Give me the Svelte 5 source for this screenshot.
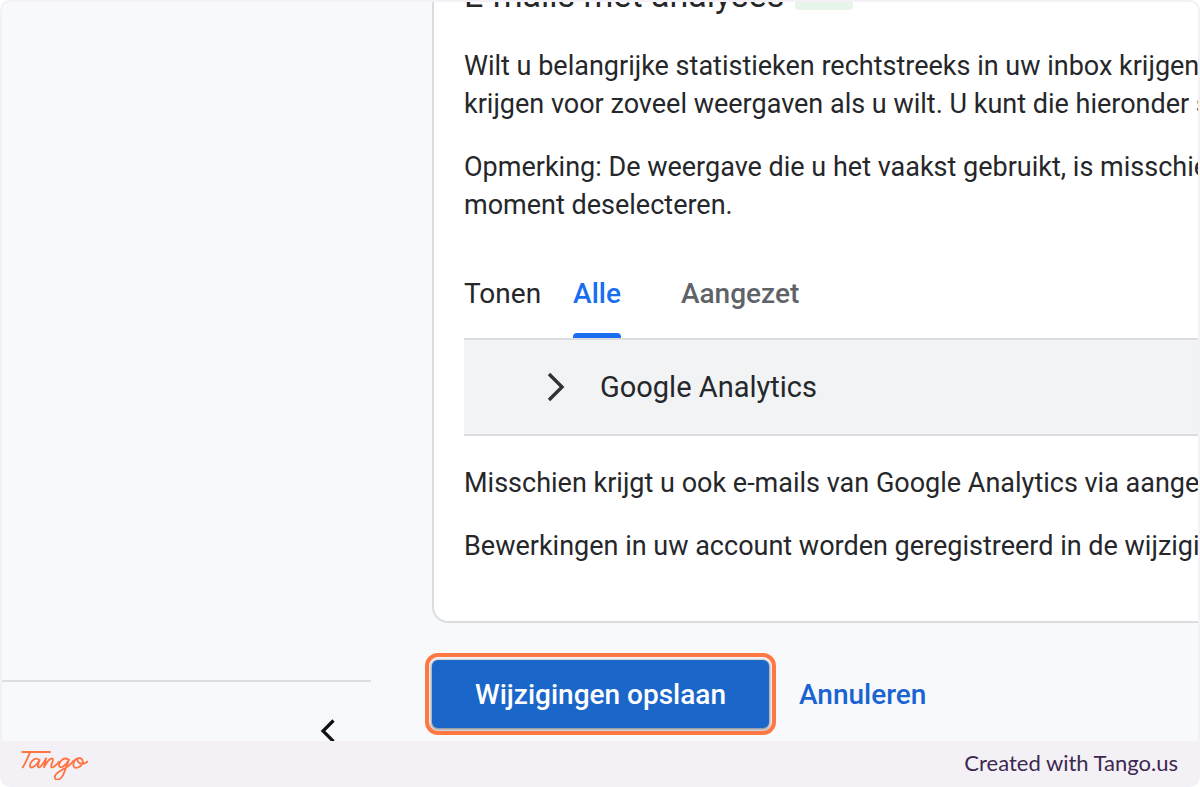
<script>
  let view = $state('Alle');
  const views = ['Alle', 'Aangezet'];
</script>

<div class="frame">
  <div class="shot">
    <aside>
      <div class="collapse">
        <button class="back" aria-label="Menu inklappen">
          <svg width="16" height="26" viewBox="0 0 16 26" aria-hidden="true">
            <path d="M13.5 2.5 3 13l10.500 10.500" fill="none" stroke="#111" stroke-width="3.200" />
          </svg>
        </button>
      </div>
    </aside>

    <main>
      <section class="card">
        <header>
          <h1>E-mails met analyses</h1>
          <span class="badge"></span>
        </header>
        <div class="copy">
          <p>Wilt u belangrijke statistieken rechtstreeks in uw inbox krijgen<br />krijgen voor zoveel weergaven als u wilt. U kunt die hieronder s</p>
          <p>Opmerking: De weergave die u het vaakst gebruikt, is misschien<br />moment deselecteren.</p>
        </div>
        <div class="tabs">
          <span class="label">Tonen</span>
          {#each views as name}
            <button class="tab" class:active={view === name} onclick={() => (view = name)}>{name}</button>
          {/each}
        </div>
        <button class="account">
          <svg width="20" height="32" viewBox="0 0 20 32" aria-hidden="true">
            <path d="M3 3 16 16 3 29" fill="none" stroke="#303236" stroke-width="3.400" />
          </svg>
          <span>Google Analytics</span>
        </button>
        <div class="copy">
          <p>Misschien krijgt u ook e-mails van Google Analytics via aangeb</p>
          <p>Bewerkingen in uw account worden geregistreerd in de wijzigin</p>
        </div>
      </section>
      <div class="actions">
        <button class="save">Wijzigingen opslaan</button>
        <button class="cancel">Annuleren</button>
      </div>
    </main>
  </div>

  <footer>
    <svg class="logo" width="70" height="32" viewBox="60 40 210 96" role="img" aria-label="Tango">
      <g fill="none" stroke="#ff7442" stroke-width="5.500" stroke-linecap="round" stroke-linejoin="round">
        <path d="M67 52H150" />
        <path d="M90 53C83 69 77 86 68 98" />
        <path d="M117 76C108 65 91 79 90 92C89 104 105 100 119 76C114 89 111 99 117 98C125 97 132 82 138 71L132 98C140 83 151 69 158 72C163 75 151 91 154 97C159 102 171 88 177 82" />
        <path d="M205 75C194 65 178 79 177 91C177 103 194 99 207 75L193 112C184 138 169 139 165 130C161 116 185 107 198 99C208 93 215 86 221 78" />
        <path d="M234 71C223 72 218 86 221 95C226 104 242 98 247 87C251 76 243 67 235 71C228 76 235 86 245 88C253 88 259 84 262 81" />
      </g>
    </svg>
    <span>Created with Tango.us</span>
  </footer>
</div>

<style>
  :global(body) {
    margin: 0;
    background: #fff;
  }

  .frame {
    display: flex;
    flex-direction: column;
    min-height: 100vh;
    box-sizing: border-box;
    padding: 2px 2px 0;
    overflow: hidden;
    border-radius: 10px;
    background: #f3f1f6;
    color: #25272a;
    font-family: Roboto, sans-serif;
    font-size: 27px;
  }

  .shot {
    flex: 1;
    display: flex;
    overflow: hidden;
    border-radius: 8px 8px 0 0;
    background: #f8f9fb;
  }

  button {
    padding: 0;
    border: 0;
    background: none;
    color: inherit;
    font: inherit;
    cursor: pointer;
  }

  aside {
    flex: 0 0 369px;
    display: flex;
    flex-direction: column;
    justify-content: flex-end;
  }

  .collapse {
    display: flex;
    justify-content: flex-end;
    height: 59px;
    border-top: 2px solid #dcdee1;
    overflow: hidden;
  }

  .back {
    align-self: flex-start;
    display: flex;
    margin: 36px 35px 0 0;
  }

  main {
    flex: 1;
    min-width: 0;
    padding-left: 61px;
    white-space: nowrap;
  }

  .card {
    padding: 0 0 56px 30px;
    border: solid #dadce0;
    border-width: 0 0 2px 2px;
    border-bottom-left-radius: 16px;
    background: #fff;
    overflow: hidden;
  }

  header {
    display: flex;
    align-items: flex-end;
    gap: 11px;
    height: 12px;
    overflow: hidden;
  }

  h1 {
    margin: 0;
    font-size: 34px;
    font-weight: 400;
    line-height: 38px;
  }

  .badge {
    width: 58px;
    height: 32px;
    margin-bottom: 4px;
    border-radius: 4px;
    background: #e6f4ea;
  }

  .copy {
    display: flex;
    flex-direction: column;
    gap: 25px;
    padding-top: 33px;
    line-height: 38px;
  }

  .copy p {
    margin: 0;
  }

  .tabs {
    display: flex;
    gap: 32px;
    height: 90px;
    margin-top: 24px;
    font-size: 28px;
    line-height: 92px;
  }

  .tab {
    position: relative;
    margin-right: 28px;
    color: #5f6368;
    font-weight: 500;
  }

  .tab.active {
    color: #1a6ef0;
  }

  .tab.active::after {
    content: '';
    position: absolute;
    right: 0;
    bottom: 0;
    left: 0;
    height: 5px;
    border-radius: 4px 4px 0 0;
    background: #1a6ef0;
  }

  .account {
    display: flex;
    align-items: center;
    gap: 34px;
    width: 100%;
    height: 98px;
    padding-left: 82px;
    border: solid #dadce0;
    border-width: 2px 0;
    background: #f1f3f4;
    font-size: 29px;
  }

  .account + .copy {
    padding-top: 28px;
  }

  .actions {
    display: flex;
    align-items: center;
    gap: 30px;
    padding: 37px 0 13px;
  }

  .save,
  .cancel {
    font-size: 28px;
    font-weight: 500;
  }

  .save {
    height: 68px;
    padding: 0 43px;
    border-radius: 6px;
    outline: 4px solid #ff7844;
    outline-offset: 3px;
    background: #1b66c9;
    box-shadow: 0 1px 3px 1px #8c9098;
    color: #fff;
  }

  .cancel {
    color: #1a63d2;
  }

  footer {
    display: flex;
    align-items: center;
    justify-content: space-between;
    height: 46px;
    padding: 0 20px 0 18px;
    color: #3c2850;
    font-family: Lato, sans-serif;
    font-size: 22px;
    line-height: 24px;
  }

  footer span {
    padding-bottom: 2px;
  }
</style>
